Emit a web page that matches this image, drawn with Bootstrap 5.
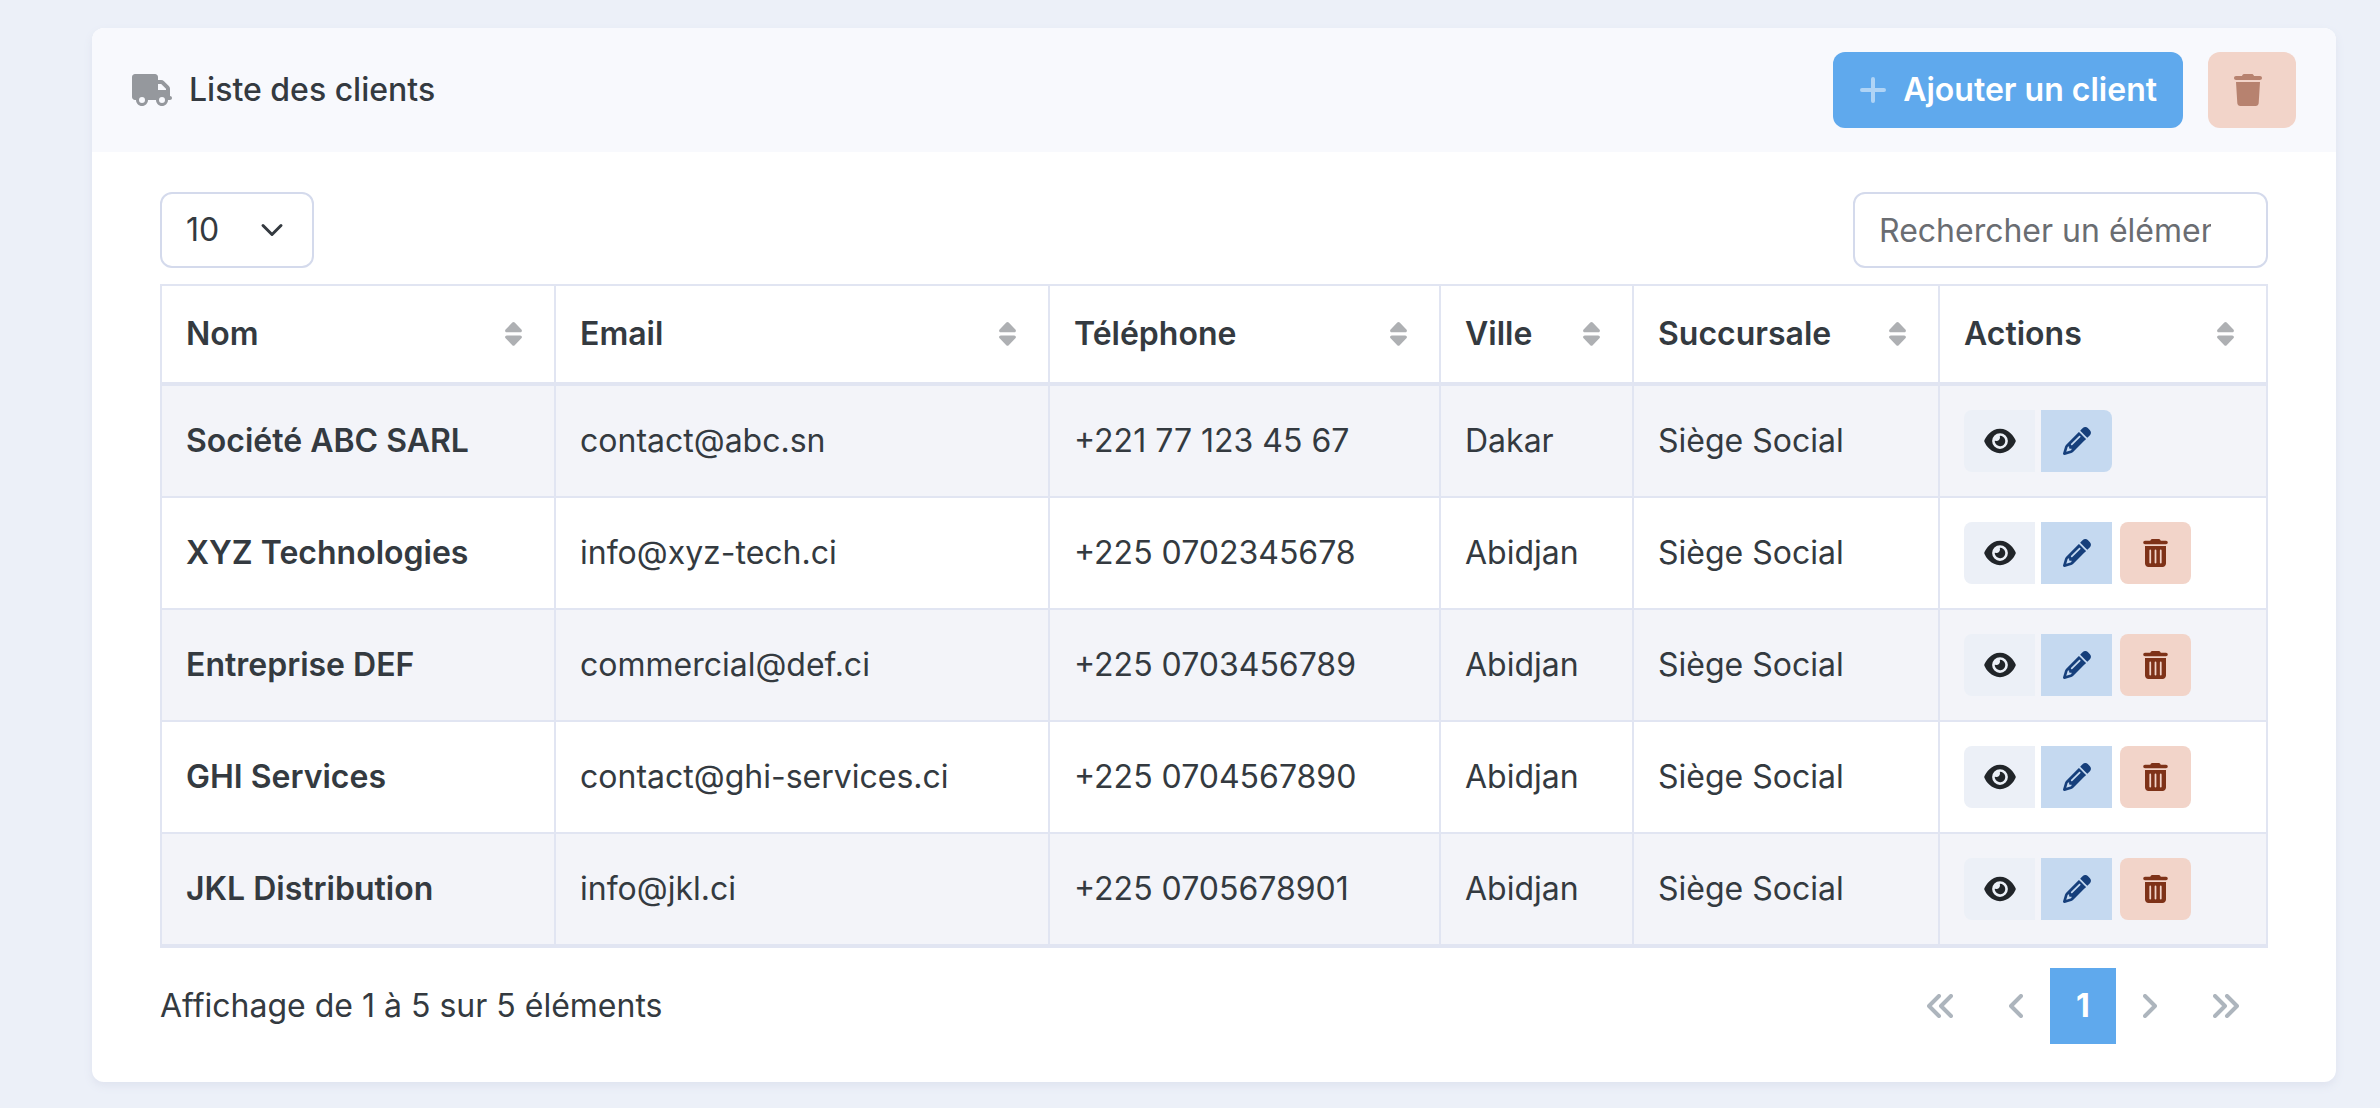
<!DOCTYPE html>
<html lang="fr">
<head>
<meta charset="utf-8">
<meta name="viewport" content="width=device-width, initial-scale=1">
<title>Liste des clients</title>
<link href="https://cdn.jsdelivr.net/npm/bootstrap@5.3.0/dist/css/bootstrap.min.css" rel="stylesheet">
<style>
  :root { --line: #e1e5f2; --field-line: #d4daec; --sky: #5fa9ed; }
  body { background: #ecf0f8; color: #343a40; font-family: Inter, "Liberation Sans", sans-serif; font-size: 32px; line-height: 48px; }
  .page-wrap { padding: 28px 44px 26px 92px; }
  .client-card { border: 0; border-radius: 12px; box-shadow: 0 4px 8px #dfe3ef; color: inherit; }
  .client-card > .card-header { background: #f8f9fd; border: 0; border-radius: 12px 12px 0 0; padding: 24px 40px; }
  .client-card > .card-body { padding: 40px 68px 38px; }
  .card-name { font-size: 32px; line-height: 48px; font-weight: 500; gap: 17px; }
  svg { display: block; fill: currentColor; flex: none; }
  .glyph { height: 32px; }
  .soft { opacity: .5; }
  .head-set { gap: 25px; }
  .head-btn { border: 0; border-radius: 12px; font-size: 32px; line-height: 48px; font-weight: 600; padding: 14px 26px; gap: 16px; }
  .btn-sky, .btn-sky:hover { background: var(--sky); color: #fff; }
  .btn-rose, .btn-rose:hover { background: #f2d4c9; color: #7e3218; }
  .btn-frost, .btn-frost:hover { background: #ecf0f7; color: #212529; }
  .btn-azure, .btn-azure:hover { background: #c5d9f0; color: #163f7b; }
  .head-del { padding-right: 34px; }
  .field { border: 2px solid var(--field-line); border-radius: 12px; font-size: 32px; line-height: 48px; padding: 12px 24px; height: 76px; color: inherit; }
  .count-field { width: 154px; background-size: 24px; background-position: right 28px center; }
  .find-field { width: 415px; padding-right: 30px; }
  .find-field::placeholder { color: #6a6d72; opacity: 1; }
  .client-table { --bs-table-striped-bg: #f3f4f9; --bs-table-striped-color: #343a40; --bs-table-color: #343a40; --bs-table-bg: #fff; table-layout: fixed; border: 2px solid var(--line); border-bottom-width: 4px; margin: 0; }
  .client-table > :not(caption) > * > * { border: 2px solid var(--line); padding: 24px; vertical-align: middle; white-space: nowrap; }
  .client-table > thead > tr > th { border-bottom-width: 4px; padding-right: 32px; font-weight: 600; }
  .client-table > tbody > tr:last-child > * { border-bottom-width: 4px; }
  .client-table > tbody > tr > th { font-weight: 600; }
  .c-name { width: 394px; } .c-mail { width: 494px; } .c-tel { width: 391px; }
  .c-town { width: 193px; } .c-branch { width: 306px; } .c-act { width: 328px; }
  .sorter { color: #aeb0b3; width: 17px; height: 24px; }
  .act { width: 71px; height: 62px; border: 0; border-radius: 0; padding: 0; }
  .act svg { height: 28px; }
  .act-set { gap: 6px; }
  .act-start { border-radius: 8px 0 0 8px; }
  .act-end { border-radius: 0 8px 8px 0; }
  .act-solo { border-radius: 8px; margin-left: 2px; }
  .foot-bar { margin-top: 20px; }
  .pager .page-item .page-link { border: 0; border-radius: 0; width: 68px; height: 76px; padding: 0; color: #adb5bd; background: transparent; font-size: 32px; line-height: 48px; font-weight: 700; }
  .pager .page-item + .page-item .page-link { margin-left: 0; }
  .pager .page-item .page-link.wide { width: 84px; }
  .pager .page-item.active .page-link { width: 66px; background: var(--sky); color: #fff; }
  .pager svg { fill: none; stroke: currentColor; stroke-width: 4; stroke-linecap: round; stroke-linejoin: round; height: 24px; }
</style>
</head>
<body>
<svg width="0" height="0" class="position-absolute" aria-hidden="true">
  <symbol id="i-sort" viewBox="0 0 17 24"><path d="M7.3.6a1.7 1.7 0 0 1 2.4 0l6.7 6.900c1.100 1.100.3 2.800-1.200 2.800H1.800C.3 10.300-.5 8.600.6 7.500zM7.300 23.200a1.700 1.700 0 0 0 2.400 0l6.700-6.900c1.100-1.100.3-2.800-1.200-2.800H1.800c-1.500 0-2.300 1.700-1.200 2.800z"/></symbol>
  <symbol id="i-eye" viewBox="0 0 576 512"><path d="M288 32c-80.8 0-145.500 36.800-192.600 80.600C48.600 156 17.300 208 2.500 243.700c-3.300 7.900-3.300 16.700 0 24.600C17.300 304 48.600 356 95.400 399.400C142.500 443.200 207.200 480 288 480s145.500-36.800 192.600-80.600c46.800-43.500 78.100-95.400 93-131.100c3.300-7.900 3.300-16.700 0-24.600c-14.900-35.700-46.200-87.700-93-131.100C433.500 68.800 368.800 32 288 32zM144 256a144 144 0 1 1 288 0 144 144 0 1 1 -288 0zm144-64c0 35.300-28.700 64-64 64c-7.100 0-13.900-1.200-20.300-3.300c-5.500-1.800-11.900 1.600-11.700 7.400c.3 6.900 1.300 13.800 3.200 20.700c13.700 51.200 66.400 81.600 117.600 67.900s81.600-66.400 67.900-117.600c-11.100-41.500-47.800-69.400-88.600-71.100c-5.800-.2-9.200 6.100-7.400 11.700c2.100 6.400 3.300 13.200 3.300 20.300z"/></symbol>
  <symbol id="i-pencil" viewBox="0 0 512 512"><path d="M410.300 231l11.300-11.300-33.900-33.900-62.100-62.100L291.700 89.800l-11.300 11.300-22.600 22.600L58.600 322.900c-10.400 10.400-18 23.300-22.200 37.400L1 480.700c-2.500 8.400-.2 17.500 6.100 23.700s15.300 8.500 23.700 6.100l120.300-35.400c14.100-4.200 27-11.800 37.400-22.200L387.700 253.700 410.300 231zM160 399.400l-9.100 22.700c-4 3.100-8.500 5.400-13.300 6.900L59.400 452l23-78.100c1.400-4.900 3.800-9.400 6.900-13.300l22.700-9.100v32c0 8.800 7.200 16 16 16h32zM362.700 18.700L348.300 33.200 325.700 55.800 314.300 67.100l33.900 33.900 62.100 62.100 33.900 33.900 11.300-11.300 22.600-22.600 14.500-14.500c25-25 25-65.500 0-90.500L453.300 18.700c-25-25-65.500-25-90.500 0zm-47.400 168l-144 144c-6.200 6.200-16.400 6.200-22.600 0s-6.200-16.400 0-22.600l144-144c6.200-6.200 16.400-6.200 22.600 0s6.200 16.400 0 22.600z"/></symbol>
  <symbol id="i-bin" viewBox="0 0 448 512"><path d="M135.200 17.700L128 32H32C14.300 32 0 46.300 0 64S14.300 96 32 96H416c17.700 0 32-14.300 32-32s-14.300-32-32-32H320l-7.200-14.300C307.400 6.800 296.300 0 284.200 0H163.800c-12.100 0-23.200 6.800-28.600 17.700zM416 128H32V448c0 35.300 28.700 64 64 64H352c35.300 0 64-28.700 64-64V128zM144 208V432c0 8.800-7.200 16-16 16s-16-7.200-16-16V208c0-8.800 7.200-16 16-16s16 7.200 16 16zm96 0V432c0 8.800-7.200 16-16 16s-16-7.200-16-16V208c0-8.800 7.200-16 16-16s16 7.200 16 16zm96 0V432c0 8.800-7.200 16-16 16s-16-7.200-16-16V208c0-8.800 7.200-16 16-16s16 7.200 16 16z"/></symbol>
</svg>

<main class="page-wrap">
  <section class="card client-card">
    <div class="card-header d-flex justify-content-between align-items-center">
      <h1 class="card-name d-flex align-items-center mb-0">
        <svg class="glyph soft" width="40" viewBox="0 0 640 512" aria-hidden="true"><path d="M48 0C21.500 0 0 21.500 0 48V368c0 26.500 21.500 48 48 48H64c0 53 43 96 96 96s96-43 96-96H384c0 53 43 96 96 96s96-43 96-96h32c17.700 0 32-14.300 32-32s-14.300-32-32-32V237.300c0-17-6.700-33.300-18.700-45.300L512 114.700c-12-12-28.300-18.700-45.300-18.700H416V48c0-26.500-21.500-48-48-48H48zM416 160h50.700L544 237.300V256H416V160zM112 416a48 48 0 1 1 96 0 48 48 0 1 1 -96 0zm368-48a48 48 0 1 1 0 96 48 48 0 1 1 0-96z"/></svg>
        Liste des clients
      </h1>
      <div class="d-flex head-set">
        <button type="button" class="btn head-btn btn-sky d-flex align-items-center">
          <svg class="glyph soft" width="28" viewBox="0 0 28 32" aria-hidden="true"><path d="M14 5V27M3 16H25" fill="none" stroke="currentColor" stroke-width="4" stroke-linecap="round"/></svg>
          Ajouter un client
        </button>
        <button type="button" class="btn head-btn head-del btn-rose d-flex align-items-center" aria-label="Supprimer">
          <svg class="glyph soft" width="28" viewBox="0 0 448 512"><path d="M135.200 17.700L128 32H32C14.300 32 0 46.300 0 64S14.300 96 32 96H416c17.700 0 32-14.300 32-32s-14.300-32-32-32H320l-7.200-14.300C307.400 6.800 296.300 0 284.200 0H163.800c-12.100 0-23.200 6.800-28.600 17.700zM416 128H32L53.200 467c1.600 25.300 22.600 45 47.900 45H346.900c25.300 0 46.300-19.700 47.900-45L416 128z"/></svg>
        </button>
      </div>
    </div>

    <div class="card-body">
      <div class="d-flex justify-content-between mb-3">
        <select class="form-select field count-field" aria-label="Éléments par page">
          <option>10</option><option>25</option><option>50</option>
        </select>
        <input type="search" class="form-control field find-field" placeholder="Rechercher un élément..." aria-label="Rechercher un élément">
      </div>

      <table class="table table-striped client-table">
        <colgroup><col class="c-name"><col class="c-mail"><col class="c-tel"><col class="c-town"><col class="c-branch"><col class="c-act"></colgroup>
        <thead>
          <tr>
            <th scope="col"><div class="d-flex justify-content-between align-items-center">Nom<svg class="sorter"><use href="#i-sort"/></svg></div></th>
            <th scope="col"><div class="d-flex justify-content-between align-items-center">Email<svg class="sorter"><use href="#i-sort"/></svg></div></th>
            <th scope="col"><div class="d-flex justify-content-between align-items-center">Téléphone<svg class="sorter"><use href="#i-sort"/></svg></div></th>
            <th scope="col"><div class="d-flex justify-content-between align-items-center">Ville<svg class="sorter"><use href="#i-sort"/></svg></div></th>
            <th scope="col"><div class="d-flex justify-content-between align-items-center">Succursale<svg class="sorter"><use href="#i-sort"/></svg></div></th>
            <th scope="col"><div class="d-flex justify-content-between align-items-center">Actions<svg class="sorter"><use href="#i-sort"/></svg></div></th>
          </tr>
        </thead>
        <tbody>
          <tr>
            <th scope="row">Société ABC SARL</th><td>contact@abc.sn</td><td>+221 77 123 45 67</td><td>Dakar</td><td>Siège Social</td>
            <td><div class="d-flex act-set">
              <button type="button" class="btn act act-start btn-frost d-flex align-items-center justify-content-center" aria-label="Voir"><svg width="32"><use href="#i-eye"/></svg></button>
              <button type="button" class="btn act act-end btn-azure d-flex align-items-center justify-content-center" aria-label="Modifier"><svg width="28"><use href="#i-pencil"/></svg></button>
            </div></td>
          </tr>
          <tr>
            <th scope="row">XYZ Technologies</th><td>info@xyz-tech.ci</td><td>+225 0702345678</td><td>Abidjan</td><td>Siège Social</td>
            <td><div class="d-flex act-set">
              <button type="button" class="btn act act-start btn-frost d-flex align-items-center justify-content-center" aria-label="Voir"><svg width="32"><use href="#i-eye"/></svg></button>
              <button type="button" class="btn act btn-azure d-flex align-items-center justify-content-center" aria-label="Modifier"><svg width="28"><use href="#i-pencil"/></svg></button>
              <button type="button" class="btn act act-solo btn-rose d-flex align-items-center justify-content-center" aria-label="Supprimer"><svg width="25"><use href="#i-bin"/></svg></button>
            </div></td>
          </tr>
          <tr>
            <th scope="row">Entreprise DEF</th><td>commercial@def.ci</td><td>+225 0703456789</td><td>Abidjan</td><td>Siège Social</td>
            <td><div class="d-flex act-set">
              <button type="button" class="btn act act-start btn-frost d-flex align-items-center justify-content-center" aria-label="Voir"><svg width="32"><use href="#i-eye"/></svg></button>
              <button type="button" class="btn act btn-azure d-flex align-items-center justify-content-center" aria-label="Modifier"><svg width="28"><use href="#i-pencil"/></svg></button>
              <button type="button" class="btn act act-solo btn-rose d-flex align-items-center justify-content-center" aria-label="Supprimer"><svg width="25"><use href="#i-bin"/></svg></button>
            </div></td>
          </tr>
          <tr>
            <th scope="row">GHI Services</th><td>contact@ghi-services.ci</td><td>+225 0704567890</td><td>Abidjan</td><td>Siège Social</td>
            <td><div class="d-flex act-set">
              <button type="button" class="btn act act-start btn-frost d-flex align-items-center justify-content-center" aria-label="Voir"><svg width="32"><use href="#i-eye"/></svg></button>
              <button type="button" class="btn act btn-azure d-flex align-items-center justify-content-center" aria-label="Modifier"><svg width="28"><use href="#i-pencil"/></svg></button>
              <button type="button" class="btn act act-solo btn-rose d-flex align-items-center justify-content-center" aria-label="Supprimer"><svg width="25"><use href="#i-bin"/></svg></button>
            </div></td>
          </tr>
          <tr>
            <th scope="row">JKL Distribution</th><td>info@jkl.ci</td><td>+225 0705678901</td><td>Abidjan</td><td>Siège Social</td>
            <td><div class="d-flex act-set">
              <button type="button" class="btn act act-start btn-frost d-flex align-items-center justify-content-center" aria-label="Voir"><svg width="32"><use href="#i-eye"/></svg></button>
              <button type="button" class="btn act btn-azure d-flex align-items-center justify-content-center" aria-label="Modifier"><svg width="28"><use href="#i-pencil"/></svg></button>
              <button type="button" class="btn act act-solo btn-rose d-flex align-items-center justify-content-center" aria-label="Supprimer"><svg width="25"><use href="#i-bin"/></svg></button>
            </div></td>
          </tr>
        </tbody>
      </table>

      <div class="foot-bar d-flex justify-content-between align-items-center">
        <div>Affichage de 1 à 5 sur 5 éléments</div>
        <nav aria-label="Pagination">
          <ul class="pagination pager mb-0">
            <li class="page-item"><a href="#" class="page-link wide d-flex align-items-center justify-content-center" aria-label="Première page"><svg width="26" viewBox="0 0 26 24"><path d="M12 2 2 12 12 22M24 2 14 12 24 22"/></svg></a></li>
            <li class="page-item"><a href="#" class="page-link d-flex align-items-center justify-content-center" aria-label="Page précédente"><svg width="14" viewBox="0 0 14 24"><path d="M12 2 2 12 12 22"/></svg></a></li>
            <li class="page-item active"><a href="#" class="page-link d-flex align-items-center justify-content-center" aria-current="page">1</a></li>
            <li class="page-item"><a href="#" class="page-link d-flex align-items-center justify-content-center" aria-label="Page suivante"><svg width="14" viewBox="0 0 14 24"><path d="M2 2 12 12 2 22"/></svg></a></li>
            <li class="page-item"><a href="#" class="page-link wide d-flex align-items-center justify-content-center" aria-label="Dernière page"><svg width="26" viewBox="0 0 26 24"><path d="M2 2 12 12 2 22M14 2 24 12 14 22"/></svg></a></li>
          </ul>
        </nav>
      </div>
    </div>
  </section>
</main>
<script src="https://cdn.jsdelivr.net/npm/bootstrap@5.3.0/dist/js/bootstrap.bundle.min.js"></script>
</body>
</html>
